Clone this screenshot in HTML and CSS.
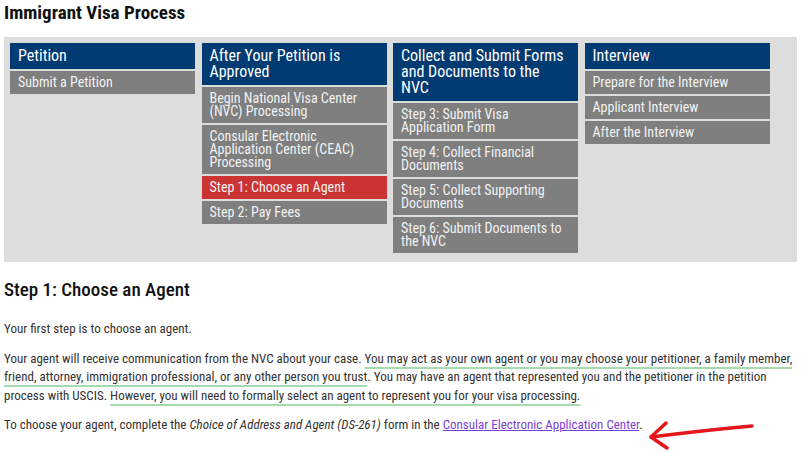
FILE: index.html
```html
<!DOCTYPE html>
<html lang="en">
<head>
    <meta charset="UTF-8">
    <meta name="viewport" content="width=device-width, initial-scale=1.0">
    <title>Immigrant Visa Process</title>
    <link rel="stylesheet" href="styles.css">
</head>
<body>
    <h1 class="page-title">Immigrant Visa Process</h1>

    <div class="process">
        <div class="stage">
            <div class="stage-title">Petition</div>
            <a class="step" href="#">Submit a Petition</a>
        </div>
        <div class="stage">
            <div class="stage-title">After Your Petition is Approved</div>
            <a class="step" href="#">Begin National Visa Center (NVC) Processing</a>
            <a class="step" href="#">Consular Electronic Application Center (CEAC) Processing</a>
            <a class="step active" href="#">Step 1: Choose an Agent</a>
            <a class="step" href="#">Step 2: Pay Fees</a>
        </div>
        <div class="stage">
            <div class="stage-title">Collect and Submit Forms and Documents to the NVC</div>
            <a class="step" href="#">Step 3: Submit Visa Application Form</a>
            <a class="step" href="#">Step 4: Collect Financial Documents</a>
            <a class="step" href="#">Step 5: Collect Supporting Documents</a>
            <a class="step" href="#">Step 6: Submit Documents to the NVC</a>
        </div>
        <div class="stage">
            <div class="stage-title">Interview</div>
            <a class="step" href="#">Prepare for the Interview</a>
            <a class="step" href="#">Applicant Interview</a>
            <a class="step" href="#">After the Interview</a>
        </div>
    </div>

    <div class="content">
        <h2>Step 1: Choose an Agent</h2>
        <p>Your first step is to choose an agent.</p>
        <p>Your agent will receive communication from the NVC about your case. <span class="mark">You may act as your own agent or you may choose your petitioner, a family member, friend, attorney, immigration professional, or any other person you trust</span>. You may have an agent that represented you and the petitioner in the petition process with USCIS. <span class="mark">However, you will need to formally select an agent to represent you for your visa processing.</span></p>
        <p>To choose your agent, complete the <em>Choice of Address and Agent (DS-261)</em> form in the <a class="link" href="#">Consular Electronic Application Center</a>.<svg class="arrow" width="108" height="34" viewBox="0 0 108 34">
                <path d="M104 8 C 70 11, 35 15, 3 19" fill="none" stroke="#e5161c" stroke-width="3.5" stroke-linecap="round"/>
                <path d="M18 5 L3 19 L19 30" fill="none" stroke="#e5161c" stroke-width="3.5" stroke-linecap="round" stroke-linejoin="round"/>
            </svg></p>
    </div>
</body>
</html>
```

FILE: styles.css
```css
body {
    font-family: 'Roboto Condensed', Roboto, sans-serif;
    font-stretch: condensed;
    color: #333;
    background-color: #fff;
    margin: 0;
    padding: 0 4px;
}
.page-title {
    font-size: 19px;
    line-height: 26px;
    color: #111;
    margin: 0 0 11px;
}
.process {
    display: grid;
    grid-template-columns: repeat(4, 185px);
    column-gap: 6.5px;
    align-items: start;
    background-color: #dddddd;
    padding: 6px 6px 9px;
    margin-right: 1px;
}
.stage {
    display: flex;
    flex-direction: column;
    gap: 2px;
}
.stage-title {
    background-color: #023a72;
    color: #fff;
    font-size: 16px;
    line-height: 16px;
    padding: 5px 8px;
}
.step {
    display: block;
    background-color: #7f7f7f;
    color: #f2f2f2;
    font-size: 14px;
    line-height: 13px;
    padding: 5px 8px;
    text-decoration: none;
}
.step.active {
    background-color: #cc3333;
}
.content h2 {
    font-size: 19px;
    line-height: 26px;
    color: #111;
    font-weight: 500;
    margin: 15px 0 17px;
}
.content p {
    font-size: 13px;
    line-height: 18.5px;
    margin: 0 0 11px;
}
.mark {
    text-decoration: underline;
    text-decoration-color: #a6dbb0;
    text-decoration-thickness: 1.5px;
    text-underline-offset: 4px;
}
.link {
    color: #7c3fd6;
}
.arrow {
    vertical-align: -13px;
    margin: -10px 0 -10px 5px;
}
```
